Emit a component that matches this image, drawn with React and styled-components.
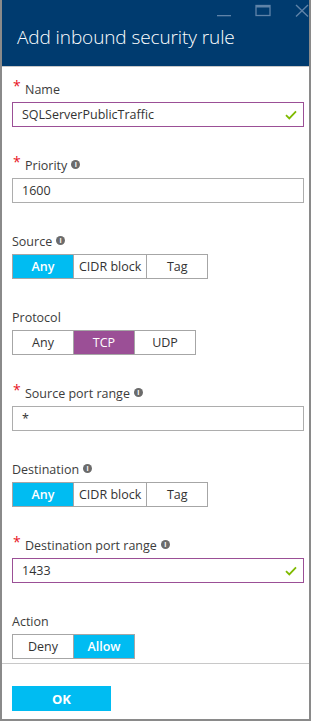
import React from "react";
import styled, { createGlobalStyle } from "styled-components";

const GlobalStyle = createGlobalStyle`
  html, body {
    margin: 0;
    padding: 0;
    background: #ffffff;
  }
  body {
    font-family: "Open Sans", "Noto Sans", "Liberation Sans", sans-serif;
  }
`;

const fields = [
  { kind: "input", label: "Name", required: true, value: "SQLServerPublicTraffic", valid: true },
  { kind: "input", label: "Priority", required: true, info: true, value: "1600" },
  { kind: "toggle", label: "Source", info: true, options: ["Any", "CIDR block", "Tag"], selected: 0, tone: "cyan" },
  { kind: "toggle", label: "Protocol", options: ["Any", "TCP", "UDP"], selected: 1, tone: "purple" },
  { kind: "input", label: "Source port range", required: true, info: true, value: "*" },
  { kind: "toggle", label: "Destination", info: true, options: ["Any", "CIDR block", "Tag"], selected: 0, tone: "cyan" },
  { kind: "input", label: "Destination port range", required: true, info: true, value: "1433", valid: true },
  { kind: "toggle", label: "Action", options: ["Deny", "Allow"], selected: 1, tone: "cyan" },
];

const InfoIcon = () => (
  <InfoDot>i</InfoDot>
);

const Check = () => (
  <svg width="12" height="10" viewBox="0 0 12 10">
    <path d="M1 5.2 L4.3 8.4 L11 1.4" fill="none" stroke="#7fba00" strokeWidth="1.8" />
  </svg>
);

const App = () => {
  return (
    <>
      <GlobalStyle />
      <Blade>
        <Header>
          <WindowControls>
            <svg width="14" height="18" viewBox="0 0 14 18">
              <rect x="0" y="15" width="14" height="1.3" fill="#5f83a8" />
            </svg>
            <svg width="16" height="18" viewBox="0 0 16 18">
              <rect x="1" y="5.5" width="14" height="10" fill="none" stroke="#5f83a8" strokeWidth="1.3" />
              <rect x="1" y="5" width="14" height="2.5" fill="#5f83a8" />
            </svg>
            <svg width="14" height="18" viewBox="0 0 14 18">
              <path d="M1 5 L13 16.5 M13 5 L1 16.5" stroke="#5f83a8" strokeWidth="1.4" />
            </svg>
          </WindowControls>
          <Title>Add inbound security rule</Title>
        </Header>
        <Form>
          {fields.map((f) => (
            <Field key={f.label}>
              <Label>
                {f.required && <Star>*</Star>}
                <LabelText $indent={f.required}>{f.label}</LabelText>
                {f.info && <InfoIcon />}
              </Label>
              {f.kind === "input" ? (
                <TextBox $valid={f.valid}>
                  <span>{f.value}</span>
                  {f.valid && <Check />}
                </TextBox>
              ) : (
                <Segments>
                  {f.options.map((o, i) => (
                    <Segment key={o} $active={i === f.selected} $tone={f.tone}>
                      {o}
                    </Segment>
                  ))}
                </Segments>
              )}
            </Field>
          ))}
        </Form>
        <Footer>
          <OkButton>OK</OkButton>
        </Footer>
      </Blade>
    </>
  );
};

const Blade = styled.div`
  width: 311px;
  height: 721px;
  box-sizing: border-box;
  border: 2px solid #8a8a8a;
  border-top: none;
  display: flex;
  flex-direction: column;
  background: #fff;
`;

const Header = styled.div`
  height: 68px;
  background: #003b6f;
  border-bottom: 1px solid #c8c8c8;
  padding-left: 15px;
  position: relative;
`;

const WindowControls = styled.div`
  position: absolute;
  top: 0;
  right: 0;
  display: flex;
  gap: 24px;
  svg {
    display: block;
  }
`;

const Title = styled.div`
  padding-top: 25px;
  color: #fff;
  font-size: 19px;
  line-height: 24px;
  font-weight: 300;
  letter-spacing: -0.1px;
`;

const Form = styled.div`
  padding: 12px 5px 0 10px;
  flex: 1;
`;

const Field = styled.div`
  margin-bottom: 28px;
  &:last-child {
    margin-bottom: 4px;
  }
`;

const Label = styled.div`
  display: flex;
  align-items: center;
  height: 20px;
  margin-bottom: 3px;
  color: #3c3c3c;
  font-size: 12.5px;
  position: relative;
`;

const Star = styled.span`
  color: #e81123;
  font-size: 14px;
  line-height: 1;
  position: absolute;
  left: 1px;
  top: 0px;
`;

const LabelText = styled.span`
  margin-left: ${(p) => (p.$indent ? "13px" : "0")};
`;

const InfoDot = styled.span`
  display: inline-flex;
  align-items: center;
  justify-content: center;
  width: 9px;
  height: 9px;
  margin-left: 4px;
  margin-top: -2px;
  border-radius: 50%;
  background: #6b6b6b;
  color: #fff;
  font-size: 7px;
  font-weight: 700;
  line-height: 1;
`;

const TextBox = styled.div`
  height: 25px;
  box-sizing: border-box;
  border: 1px solid ${(p) => (p.$valid ? "#9b4f96" : "#adadad")};
  display: flex;
  align-items: center;
  justify-content: space-between;
  padding: 0 6px 0 9px;
  font-size: 12.5px;
  color: #333;
  svg {
    display: block;
  }
`;

const Segments = styled.div`
  display: flex;
  height: 25px;
`;

const tones = { cyan: "#00bcf2", purple: "#9b4f96" };

const Segment = styled.div`
  min-width: 62px;
  box-sizing: border-box;
  padding: 0 5px;
  border: 1px solid #a6a6a6;
  margin-left: -1px;
  &:first-child {
    margin-left: 0;
  }
  display: flex;
  align-items: center;
  justify-content: center;
  font-size: 12.5px;
  background: ${(p) => (p.$active ? tones[p.$tone] : "#fff")};
  color: ${(p) => (p.$active ? "#fff" : "#333")};
  font-weight: ${(p) => (p.$active && p.$tone === "cyan" ? 600 : 400)};
`;

const Footer = styled.div`
  border-top: 1px solid #c8c8c8;
  padding: 22px 10px 8px;
`;

const OkButton = styled.div`
  width: 99px;
  height: 25px;
  background: #00bcf2;
  color: #fff;
  font-weight: 700;
  font-size: 13px;
  display: flex;
  align-items: center;
  justify-content: center;
`;

export default App;
